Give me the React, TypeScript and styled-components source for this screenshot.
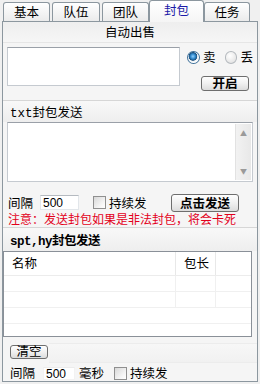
import React from "react";
import styled, { createGlobalStyle, css } from "styled-components";

const GlobalStyle = createGlobalStyle`
  html, body {
    margin: 0;
    padding: 0;
    background: #f0f0f0;
  }
  body {
    font-family: "Noto Sans CJK SC", "Liberation Sans", sans-serif;
    font-size: 12px;
    color: #000;
  }
  * {
    box-sizing: border-box;
  }
`;

const Window = styled.div`
  width: 260px;
  height: 384px;
  background: #f0f0f0;
  overflow: hidden;
`;

const TabBar = styled.div`
  display: flex;
  align-items: flex-end;
  height: 21px;
  padding-left: 3px;
`;

const Tab = styled.div<{ $w: number; $gap?: number; $active?: boolean }>`
  width: ${(p) => p.$w}px;
  margin-right: ${(p) => p.$gap ?? 0}px;
  height: 19px;
  border: 1px solid #8c979f;
  border-bottom: none;
  border-radius: 3px 3px 0 0;
  background: linear-gradient(#ffffff, #ebebeb);
  display: flex;
  align-items: center;
  justify-content: center;
  font-size: 12.5px;
  line-height: 1;
  ${(p) =>
    p.$active &&
    css`
      height: 22px;
      margin-bottom: -1px;
      position: relative;
      z-index: 1;
      padding-bottom: 2px;
      background: linear-gradient(#ffffff, #f5f5f5);
      color: #1c1ca8;
    `}
`;

const Panel = styled.div`
  margin-left: 2px;
  width: 256px;
  height: 361px;
  border: 1px solid #8c979f;
  background: #f5f5f5;
  display: flex;
  flex-direction: column;
`;

const CenterHeader = styled.div`
  height: 21px;
  display: flex;
  align-items: center;
  justify-content: center;
  font-size: 12.5px;
  background: linear-gradient(#eeeeee, #f6f6f6);
  border-bottom: 1px solid #e6e6e6;
`;

const SectionHeader = styled.div<{ $bold?: boolean; $h: number; $mt?: number }>`
  height: ${(p) => p.$h}px;
  margin-top: ${(p) => p.$mt ?? 0}px;
  border-top: 1px solid #d6d6d6;
  background: linear-gradient(#f8f8f8, #eeeeee);
  display: flex;
  align-items: center;
  padding-left: 7px;
  font-family: "Liberation Mono", "Noto Sans CJK SC", monospace;
  font-size: 12.5px;
  font-weight: ${(p) => (p.$bold ? 700 : 400)};
  letter-spacing: ${(p) => (p.$bold ? "-0.5px" : "0")};
`;

const SellRow = styled.div`
  display: flex;
  padding: 4px 0 0 4px;
`;

const TextBox = styled.div<{ $w: number; $h: number }>`
  width: ${(p) => p.$w}px;
  height: ${(p) => p.$h}px;
  background: #fff;
  border: 1px solid #c5cad0;
  border-top-color: #9aa0a8;
  display: flex;
  justify-content: flex-end;
`;

const ScrollBar = styled.div`
  width: 16px;
  margin: 1px;
  background: linear-gradient(90deg, #f2f2f2, #e8e8e8);
  border-left: 1px solid #e2e2e2;
  display: flex;
  flex-direction: column;
  justify-content: space-between;
  align-items: center;
  padding: 6px 0 5px;
  color: #9a9a9a;
  font-size: 7px;
  line-height: 1;
`;

const SideCol = styled.div`
  width: 66px;
  margin-left: 7px;
  display: flex;
  flex-direction: column;
`;

const RadioRow = styled.div`
  display: flex;
  align-items: center;
  margin-top: 4px;
  height: 13px;
`;

const Radio = styled.span<{ $on?: boolean }>`
  width: 13px;
  height: 13px;
  border-radius: 50%;
  border: 1px solid ${(p) => (p.$on ? "#3d6f98" : "#b4b9be")};
  background: ${(p) =>
    p.$on
      ? "radial-gradient(circle at 45% 40%, #8fd0ff 0, #2f86c9 2.5px, #1b4f7e 4px, #e9eef2 4.6px, #ffffff 6px)"
      : "radial-gradient(circle at 40% 35%, #ffffff, #dcdcdc)"};
  margin-right: 3px;
`;

const RadioLabel = styled.span<{ $gap?: number }>`
  margin-right: ${(p) => p.$gap ?? 0}px;
  font-size: 12.5px;
  line-height: 1;
`;

const Button = styled.div<{ $w: number; $h: number; $bold?: boolean }>`
  width: ${(p) => p.$w}px;
  height: ${(p) => p.$h}px;
  border: 1px solid #6e6e6e;
  border-radius: 3px;
  background: linear-gradient(#fefefe, #f0f0f0 50%, #dcdcdc);
  display: flex;
  align-items: center;
  justify-content: center;
  font-size: 12.5px;
  font-weight: ${(p) => (p.$bold ? 700 : 400)};
  line-height: 1;
`;

const StartButton = styled(Button)`
  align-self: flex-end;
  margin-top: 12px;
  margin-right: 4px;
`;

const TxtBlock = styled.div`
  padding-left: 4px;
`;

const ControlRow = styled.div<{ $mt: number; $pl: number; $h: number }>`
  display: flex;
  align-items: center;
  margin-top: ${(p) => p.$mt}px;
  padding-left: ${(p) => p.$pl}px;
  height: ${(p) => p.$h}px;
`;

const Label = styled.span<{ $w?: number; $ml?: number }>`
  width: ${(p) => (p.$w ? `${p.$w}px` : "auto")};
  margin-left: ${(p) => p.$ml ?? 0}px;
  font-size: 12.5px;
  line-height: 1;
  white-space: nowrap;
`;

const NumInput = styled.div<{ $w: number; $h: number; $flat?: boolean }>`
  width: ${(p) => p.$w}px;
  height: ${(p) => p.$h}px;
  background: #fff;
  border: 1px solid ${(p) => (p.$flat ? "#f2f2f2" : "#e2e6ea")};
  border-top-color: ${(p) => (p.$flat ? "#ececec" : "#b5bac0")};
  font-family: "Liberation Sans", sans-serif;
  font-size: 12px;
  display: flex;
  align-items: center;
  padding-left: 2px;
`;

const Check = styled.span<{ $ml: number }>`
  width: 13px;
  height: 13px;
  margin-left: ${(p) => p.$ml}px;
  margin-right: 3px;
  border: 1px solid #8f8f8f;
  background: linear-gradient(135deg, #d8d8d8, #f6f6f6 70%, #ffffff);
`;

const SendButton = styled(Button)`
  margin-left: auto;
  margin-right: 18px;
`;

const Warning = styled.div`
  height: 13px;
  padding-left: 5px;
  color: #e3001b;
  line-height: 13px;
  white-space: nowrap;
`;

const List = styled.div`
  width: 249px;
  height: 87px;
  background: #fff;
  border: 1px solid #8a9098;
  display: flex;
  flex-direction: column;
`;

const ListHead = styled.div`
  height: 24px;
  display: flex;
  border-bottom: 1px solid #ececec;
`;

const HeadCell = styled.div<{ $w?: number }>`
  width: ${(p) => (p.$w ? `${p.$w}px` : "auto")};
  flex: ${(p) => (p.$w ? "none" : 1)};
  border-right: 1px solid #e8e8e8;
  display: flex;
  align-items: center;
  padding-left: 8px;
  font-size: 12.5px;
  line-height: 1;
  &:last-child {
    border-right: none;
  }
`;

const ListRow = styled.div`
  height: 16px;
  display: flex;
  border-bottom: 1px solid #f0f0f0;
`;

const RowCell = styled.div<{ $w?: number; $line?: boolean }>`
  width: ${(p) => (p.$w ? `${p.$w}px` : "auto")};
  flex: ${(p) => (p.$w ? "none" : 1)};
  border-right: 1px solid ${(p) => (p.$line ? "#f0f0f0" : "transparent")};
`;

const ClearRow = styled.div`
  display: flex;
  align-items: center;
  margin-top: 7px;
  padding-left: 7px;
  height: 15px;
`;

const FadeStrip = styled.div`
  flex: 1;
  height: 20px;
  margin-left: 1px;
  border-top: 1px solid #ececec;
  border-bottom: 1px solid #ececec;
  background: linear-gradient(#f7f7f7, #f1f1f1);
  align-self: flex-start;
  margin-top: -1px;
`;

const columns = [172, 40];

export default function App() {
  return (
    <Window>
      <GlobalStyle />
      <TabBar>
        <Tab $w={47} $gap={2}>基本</Tab>
        <Tab $w={48} $gap={2}>队伍</Tab>
        <Tab $w={47}>团队</Tab>
        <Tab $w={55} $active>封包</Tab>
        <Tab $w={46}>任务</Tab>
      </TabBar>
      <Panel>
        <CenterHeader>自动出售</CenterHeader>
        <SellRow>
          <TextBox $w={173} $h={39} />
          <SideCol>
            <RadioRow>
              <Radio $on />
              <RadioLabel $gap={9}>卖</RadioLabel>
              <Radio />
              <RadioLabel>丢</RadioLabel>
            </RadioRow>
            <StartButton $w={48} $h={15} $bold>开启</StartButton>
          </SideCol>
        </SellRow>

        <SectionHeader $h={22} $mt={9}>txt封包发送</SectionHeader>
        <TxtBlock>
          <TextBox $w={246} $h={60}>
            <ScrollBar>
              <span>▲</span>
              <span>▼</span>
            </ScrollBar>
          </TextBox>
        </TxtBlock>

        <ControlRow $mt={12} $pl={5} $h={18}>
          <Label $w={32}>间隔</Label>
          <NumInput $w={39} $h={15}>500</NumInput>
          <Check $ml={14} />
          <Label>持续发</Label>
          <SendButton $w={68} $h={18} $bold>点击发送</SendButton>
        </ControlRow>
        <Warning>注意：发送封包如果是非法封包，将会卡死</Warning>

        <SectionHeader $h={24} $mt={2} $bold>spt,hy封包发送</SectionHeader>
        <List>
          <ListHead>
            <HeadCell $w={columns[0]}>名称</HeadCell>
            <HeadCell $w={columns[1]}>包长</HeadCell>
            <HeadCell />
          </ListHead>
          {[0, 1, 2].map((i) => (
            <ListRow key={i}>
              <RowCell $w={columns[0]} $line={i < 2} />
              <RowCell $w={columns[1]} $line={i < 2} />
              <RowCell />
            </ListRow>
          ))}
        </List>

        <ClearRow>
          <Button $w={38} $h={14}>清空</Button>
          <FadeStrip />
        </ClearRow>
        <ControlRow $mt={7} $pl={7} $h={15}>
          <Label $w={33}>间隔</Label>
          <NumInput $w={32} $h={13} $flat>500</NumInput>
          <Label $ml={4}>毫秒</Label>
          <Check $ml={10} />
          <Label>持续发</Label>
        </ControlRow>
      </Panel>
    </Window>
  );
}
